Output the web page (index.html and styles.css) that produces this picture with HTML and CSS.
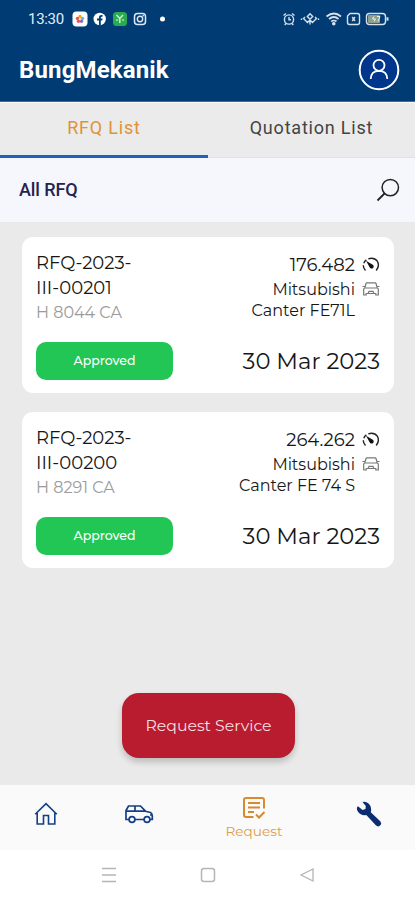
FILE: index.html
```html
<!DOCTYPE html>
<html lang="en">
<head>
<meta charset="utf-8">
<meta name="viewport" content="width=device-width, initial-scale=1">
<title>BungMekanik</title>
<link rel="stylesheet" href="styles.css">
</head>
<body>
<svg class="defs" width="0" height="0" aria-hidden="true">
  <symbol id="gauge" viewBox="0 0 18 16"><g fill="none" stroke="#222" stroke-width="1.4"><path d="M3.5 13.5Q1.2 11 1.3 8.2M1.8 6.2Q2.6 4 4.4 2.8M6.3 1.8Q12-.2 15.3 4.2Q18 9 14.2 13.5"/></g><path d="M4 3.8 10.8 7.8A2.1 2.1 0 1 1 7.6 10.2Z" fill="#111"/></symbol>
  <symbol id="front-car" viewBox="0 0 18 16"><g fill="none" stroke="#777" stroke-width="1.2"><path d="M2.7 7 4 2.5Q4.2 1.8 5 1.8H13Q13.8 1.8 14 2.5L15.3 7M3 7H15Q16.3 7 16.3 8.3V14H13.8V12.5H4.2V14H1.7V8.3Q1.7 7 3 7M.5 5.5H2.5M15.5 5.5H17.5M6 12.5 7 10.3H11L12 12.5"/></g></symbol>
</svg>
<header class="header">
  <div class="status">
    <span class="clock">13:30</span>
    <svg class="status-apps" viewBox="0 0 94 16" width="94" height="16">
      <rect x=".5" y=".5" width="15" height="15" rx="4" fill="#fff"/>
      <circle cx="8" cy="5.5" r="1.7" fill="#f6a623"/><circle cx="10.5" cy="7.4" r="1.7" fill="#59b5e8"/><circle cx="9.5" cy="10.2" r="1.7" fill="#8c62c8"/><circle cx="6.5" cy="10.2" r="1.7" fill="#e84b80"/><circle cx="5.5" cy="7.4" r="1.7" fill="#ee4d43"/><circle cx="8" cy="8" r="1.3" fill="#ffe36b"/>
      <circle cx="27.7" cy="8" r="6.2" fill="#fff"/><path d="M27 14.5V9.5H25V7.6H27V6Q27 3.6 30.5 4V5.7Q28.8 5.5 28.8 6.5V7.6H30.6L30.2 9.5H28.8V14.5Z" fill="#003b73"/>
      <rect x="41" y="1" width="14" height="14" rx="3.5" fill="#2bab51"/><path d="M44.5 4 47.8 7.5 51 4M47.8 8V12" fill="none" stroke="#c9f4cd" stroke-width="1.5"/><circle cx="45" cy="9" r="1" fill="#a4e4ad"/><circle cx="51" cy="9" r="1" fill="#a4e4ad"/>
      <rect x="62.5" y="2.5" width="11" height="11" rx="3" fill="none" stroke="#dce8f6" stroke-width="1.5"/><circle cx="68" cy="8" r="2.7" fill="none" stroke="#dce8f6" stroke-width="1.4"/><circle cx="71.2" cy="4.8" r=".8" fill="#fff"/>
      <circle cx="90.5" cy="8" r="2.5" fill="#fff"/>
    </svg>
    <svg class="status-system" viewBox="0 0 108 16" width="108" height="16" fill="none" stroke="#d5e1ef" stroke-width="1.4">
      <circle cx="7" cy="8.5" r="4.6"/><path d="M1.5 4.5 4 2.5M12.5 4.5 10 2.5M7 6V8.8H9M3.8 12.5 2.8 14M10.2 12.5 11.2 14"/>
      <path d="M28 2.8 30.7 5.5 28 8.2 25.3 5.5ZM28 8V13.5M23 6 21.5 7.5 25.5 11.5 28 9 30.5 11.5 34.5 7.5 33 6M19.5 7.5V9M36.5 7.5V9"/>
      <path d="M44.5 5.5Q52-.5 59 5.5M47 8Q52 4 56.5 8M49.2 10.5Q52 8.5 54.5 10.5" stroke-width="1.7"/><circle cx="51.8" cy="12.7" r="1.1" fill="#fff"/>
      <path d="M68 2.5H75.5Q77.5 2.5 77.5 4.5V11.5Q77.5 13.5 75.5 13.5H67.5Q65.5 13.5 65.5 11.5V5Z"/><path d="M70.2 6 73 10M73 6 70.2 10"/>
      <rect x="84.5" y="2.5" width="19" height="11" rx="3"/><rect x="86" y="4" width="12" height="8" rx="1" fill="#8d9f91" stroke="none"/><path d="M105.5 6.3V9.7" stroke-width="2"/><path d="M92 5.5 90.5 8H93.5L92 10.5M95 5.5H98L96 10.5" stroke="#eef4dc" stroke-width="1"/>
    </svg>
  </div>
  <div class="brand-row">
    <h1 class="brand">BungMekanik</h1>
    <svg class="avatar" viewBox="0 0 42 42" width="42" height="42" fill="none" stroke="#fff"><circle cx="21" cy="21" r="19.3" fill="#00368b" stroke-width="2"/><circle cx="21" cy="16.3" r="5.5" stroke-width="1.8"/><path d="M12.7 30Q13 21.8 21 21.8T29.3 30" stroke-width="1.8"/></svg>
  </div>
</header>
<nav class="tabs"><a class="tab active">RFQ List</a><a class="tab">Quotation List</a></nav>
<section class="filter">
  <h2 class="filter-title">All RFQ</h2>
  <svg viewBox="0 0 24 24" width="24" height="24" fill="none" stroke="#222" stroke-width="1.5"><circle cx="14.3" cy="9.6" r="8.2"/><path d="M8.5 15.5 1.5 22.5" stroke-width="1.8"/></svg>
</section>
<main class="list">
  <article class="card">
    <div class="left">
      <div class="number">RFQ-2023-<br>III-00201</div>
      <div class="plate">H 8044 CA</div>
      <div class="badge">Approved</div>
    </div>
    <div class="right">
      <div class="meta km"><span>176.482</span><svg width="18" height="16"><use href="#gauge"/></svg></div>
      <div class="meta make"><span>Mitsubishi</span><svg width="18" height="16"><use href="#front-car"/></svg></div>
      <div class="model">Canter FE71L</div>
      <div class="date">30 Mar 2023</div>
    </div>
  </article>
  <article class="card">
    <div class="left">
      <div class="number">RFQ-2023-<br>III-00200</div>
      <div class="plate">H 8291 CA</div>
      <div class="badge">Approved</div>
    </div>
    <div class="right">
      <div class="meta km"><span>264.262</span><svg width="18" height="16"><use href="#gauge"/></svg></div>
      <div class="meta make"><span>Mitsubishi</span><svg width="18" height="16"><use href="#front-car"/></svg></div>
      <div class="model">Canter FE 74 S</div>
      <div class="date">30 Mar 2023</div>
    </div>
  </article>
  <button class="request">Request Service</button>
</main>
<footer class="bottom">
  <a class="item home"><svg viewBox="0 0 24 24" width="24" height="24" fill="none" stroke="#143f86" stroke-width="1.6"><path d="M1.2 12.3 12 1.7 22.8 12.3M3.2 11V22H9.5V13.5H14.5V22H20.8V11"/></svg></a>
  <a class="item car"><svg viewBox="0 0 30 20" width="30" height="20" fill="none" stroke="#143f86" stroke-width="1.7"><path d="M5 15.5H2V6.5L4.5 2H16.5L21.5 7.2 26.5 8.5Q28.3 9.5 28.3 12V15.5H26M11 15.5H20M2 7.2H21.5M11 2V7.2M26 11H28"/><circle cx="8" cy="15.5" r="2.9"/><circle cx="23" cy="15.5" r="2.9"/></svg></a>
  <a class="item req"><svg viewBox="0 0 24 24" width="24" height="24" fill="none" stroke="#d88b2e" stroke-width="2"><path d="M11.5 21H4Q2 21 2 19V3.8Q2 2 4 2H20Q22 2 22 4V12.5M6 7H18M6 11.5H18M6 16H12M14 18.5 17 21.5 22.5 16"/></svg><span>Request</span></a>
  <a class="item tool"><svg viewBox="0 0 28 28" width="28" height="28"><path d="M7.5 2 10.8 6 10.5 9 7.5 10 3 6.2Q.7 8 3 11.8 6 16 11.3 15L20.8 25.3Q23 27.5 25 25.5T25.5 21.5L15.8 12.3Q17.2 7 13.5 3.5 11 1.2 7.5 2Z" fill="#0b2d70"/></svg></a>
</footer>
<div class="system-nav"><svg viewBox="0 0 16 18" width="16" height="18" stroke="#b5b5b5" stroke-width="1.6"><path d="M1 2.5H15M1 9H15M1 15.5H15"/></svg><svg viewBox="0 0 16 18" width="16" height="18" fill="none" stroke="#b5b5b5" stroke-width="1.5"><rect x="1.5" y="2.5" width="13" height="13" rx="2.5"/></svg><svg viewBox="0 0 16 18" width="16" height="18" fill="none" stroke="#b5b5b5" stroke-width="1.3"><path d="M14 3V15L2 9Z"/></svg></div>
</body>
</html>
```
FILE: styles.css
```css
* { box-sizing: border-box; }
body { margin: 0; width: 415px; height: 900px; display: flex; flex-direction: column; overflow: hidden; background: #eaeaea; color: #161616; font-family: Montserrat, Inter, "Liberation Sans", sans-serif; }
svg { display: block; flex: none; }
.defs { position: absolute; }
h1, h2 { margin: 0; }
.header { height: 102px; flex: none; background: #003b73; color: #fff; border-bottom: 1px solid #47698e; }
.status { height: 38px; padding: 0 25px 0 28px; display: flex; align-items: center; }
.clock { width: 44px; font: 400 15px/18px Roboto, sans-serif; letter-spacing: -.3px; color: #e3edf8; }
.status-system { margin-left: auto; }
.brand-row { height: 63px; padding: 0 15px 0 19px; display: flex; align-items: center; justify-content: space-between; }
.brand { font: 700 24px/30px Roboto, sans-serif; letter-spacing: .15px; }
.tabs { height: 56px; flex: none; display: grid; grid-template-columns: 208px 1fr; border-top: 1px solid #f8f8f8; background: #ebebeb; }
.tab { padding-top: 12px; text-align: center; font: 400 18px/26px Roboto, sans-serif; letter-spacing: .8px; color: #444; border-bottom: 1px solid #dfe2e6; }
.active { color: #df9338; border-bottom: 3px solid #2261b9; }
.filter { height: 64px; flex: none; padding: 0 15px 0 19px; display: flex; align-items: center; justify-content: space-between; background: #f5f7fc; }
.filter-title { font: 500 18px/26px Roboto, sans-serif; letter-spacing: -.1px; color: #25234f; }
.list { height: 563px; flex: none; padding: 15px 21px 0 22px; }
.card { height: 156px; margin-bottom: 19px; padding: 14px 14px 0; display: flex; justify-content: space-between; border-radius: 11px; background: #fff; }
.number { font-size: 18px; line-height: 25px; }
.plate { font-size: 16px; line-height: 23px; color: #9b9b9b; }
.badge { width: 137px; height: 38px; margin-top: 18px; border-radius: 10px; background: #22c654; color: #fff; font-size: 12.5px; font-weight: 500; line-height: 37px; text-align: center; }
.right { display: flex; flex-direction: column; align-items: flex-end; }
.meta { display: flex; align-items: center; gap: 7px; }
.km { height: 27px; font-size: 18px; }
.make { height: 22px; font-size: 16px; }
.model { font-size: 16px; line-height: 22px; padding-right: 25px; }
.date { margin-top: 22px; font-size: 22.7px; line-height: 34px; }
.request { display: block; width: 173px; height: 65px; margin: 125px auto 0 100px; padding: 0; border: 0; border-radius: 17px; background: #b91c2e; color: #f6dfe2; box-shadow: 0 4px 6px #0003; font: 400 15.7px/65px Montserrat, Inter, sans-serif; }
.bottom { height: 65px; flex: none; display: grid; grid-template-columns: 92px 93px 138px 92px; background: #fafafa; }
.item { display: flex; flex-direction: column; align-items: center; padding-top: 17px; }
.car { padding-top: 19px; }
.req { padding-top: 11px; color: #df9b4d; font-size: 13.7px; line-height: 22px; }
.tool { padding-top: 15px; }
.system-nav { height: 50px; flex: none; display: flex; align-items: center; gap: 83px; padding-left: 101px; background: #fff; }
```
